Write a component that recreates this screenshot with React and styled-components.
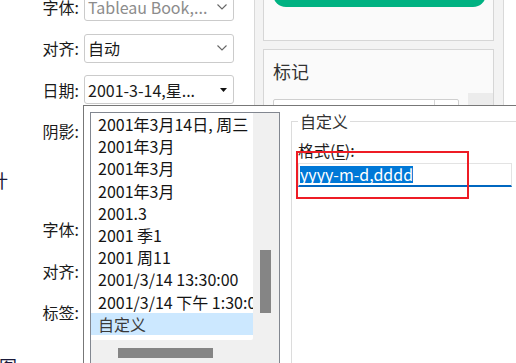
import React from "react";
import styled, { createGlobalStyle } from "styled-components";

const GlobalStyle = createGlobalStyle`
  html, body {
    margin: 0;
    padding: 0;
    background: #ffffff;
    overflow: hidden;
  }
  body {
    font-family: "Noto Sans CJK SC", "Noto Sans", sans-serif;
    color: #1e1e1e;
  }
`;

const Screen = styled.div`
  position: relative;
  width: 516px;
  height: 363px;
  overflow: hidden;
  display: flex;
  background: #ffffff;
`;

/* ---------- left property pane ---------- */

const LeftPane = styled.div`
  width: 254px;
  flex: none;
  display: flex;
  flex-direction: column;
  margin-top: -14px;
`;

const Row = styled.div`
  display: flex;
  align-items: center;
  height: 41.5px;
  flex: none;
`;

const Label = styled.div`
  width: 79px;
  text-align: right;
  font-size: 16px;
  line-height: 20px;
  color: #1a1a1a;
`;

const Select = styled.div`
  margin-left: 5px;
  width: 150px;
  height: 29px;
  box-sizing: border-box;
  border: 1px solid #cbcbcb;
  border-radius: 3px;
  padding: 0 6px 0 3px;
  display: flex;
  align-items: center;
  justify-content: space-between;
  font-size: 16px;
  color: ${(p) => (p.$muted ? "#8c8c8c" : "#1a1a1a")};
  background: #fff;
  white-space: nowrap;
`;

const SectionTitle = styled.div`
  height: ${(p) => p.$h}px;
  flex: none;
  box-sizing: border-box;
  padding-top: ${(p) => p.$top || 0}px;
  display: flex;
  align-items: ${(p) => (p.$top ? "flex-start" : "center")};
  margin-left: ${(p) => p.$indent}px;
  font-size: 18px;
  line-height: 22px;
  color: #1a1a3a;
`;

const Chevron = () => (
  <svg width="10" height="6" viewBox="0 0 10 6">
    <polyline points="0.5,0.5 5,5 9.5,0.5" fill="none" stroke="#666" strokeWidth="1.1" />
  </svg>
);

const Caret = () => (
  <svg width="7" height="4" viewBox="0 0 7 4">
    <polygon points="0,0 7,0 3.5,4" fill="#111" />
  </svg>
);

/* ---------- right card pane ---------- */

const RightPane = styled.div`
  width: 250px;
  flex: none;
  box-sizing: border-box;
  background: #f3f3f3;
  border-left: 1px solid #d9d9d9;
  border-right: 1px solid #d9d9d9;
  padding: 0 9px 0 8px;
  display: flex;
  flex-direction: column;
  gap: 8px;
`;

const Card = styled.div`
  box-sizing: border-box;
  background: #fafafa;
  border: 1px solid #d6d6d6;
  flex: none;
`;

const TopCard = styled(Card)`
  margin-top: -20px;
  height: 61px;
  padding: 0 7px 0 9px;
`;

const GreenButton = styled.div`
  height: 26px;
  border-radius: 0 0 13px 13px;
  background: #00b282;
`;

const MarksCard = styled(Card)`
  flex: 1;
  display: grid;
  grid-template-columns: 1fr 25px;
`;

const CardTitle = styled.div`
  padding: 9px 0 0 9px;
  font-size: 18px;
  line-height: 24px;
  color: #333;
`;

const CardSelect = styled.div`
  margin: 16px 0 0 9px;
  width: 186px;
  height: 30px;
  box-sizing: border-box;
  border: 1px solid #cfcfcf;
  border-radius: 2px;
  display: grid;
  grid-template-columns: 1fr 24px;
  background: #fff;

  & > span + span {
    border-left: 1px solid #d6d6d6;
  }
`;

const SideTrack = styled.div`
  margin-top: 43px;
  background: #ececec;
`;

/* ---------- date format popup ---------- */

const Popup = styled.div`
  position: absolute;
  left: 83px;
  top: 105px;
  right: -20px;
  bottom: -20px;
  background: #fff;
  border: 1px solid #777;
  box-sizing: border-box;
  display: flex;
  align-items: flex-start;
  padding: 6px 0 0 6px;
`;

const ListBox = styled.div`
  width: 190px;
  height: 280px;
  flex: none;
  box-sizing: border-box;
  border: 1px solid #828790;
  border-bottom: none;
  display: grid;
  grid-template-columns: 162px 26px;
  grid-template-rows: 227px 1fr;
  background: #f0f0f0;
`;

const List = styled.div`
  background: #fff;
  overflow: hidden;
  border-bottom-right-radius: 2px;
`;

const Item = styled.div`
  height: 22.2px;
  line-height: 22px;
  padding-left: 7px;
  font-size: 16px;
  white-space: nowrap;
  overflow: hidden;
  color: ${(p) => (p.$selected ? "#3a3a3a" : "#141414")};
  background: ${(p) => (p.$selected ? "#cce8ff" : "transparent")};
`;

const VScroll = styled.div`
  background: #f0f0f0;
  padding: 137px 0 0 7px;
`;

const VThumb = styled.div`
  width: 11px;
  height: 63px;
  background: #858585;
`;

const HScroll = styled.div`
  grid-column: 1 / -1;
  padding: 8px 0 0 27px;
`;

const HThumb = styled.div`
  width: 95px;
  height: 10px;
  background: #858585;
`;

const GroupBox = styled.fieldset`
  margin: -2px 0 0 11px;
  padding: 0 0 0 6px;
  width: 260px;
  height: 300px;
  box-sizing: border-box;
  border: 1px solid #dcdcdc;
  border-radius: 0;
`;

const Legend = styled.legend`
  padding: 0 2px;
  margin-left: 0;
  font-size: 16px;
  line-height: 22px;
  color: #333;
`;

const FieldLabel = styled.div`
  font-size: 16px;
  line-height: 20px;
  margin-top: 8px;
  color: #1e1e1e;

  & u {
    text-underline-offset: 2px;
  }
`;

const FormatInput = styled.div`
  margin-top: 3px;
  width: 214px;
  height: 24px;
  box-sizing: border-box;
  border: 1px solid #e3e3e3;
  border-bottom: 2px solid #0067c0;
  background: #fff;
  display: flex;
  align-items: center;
  padding-left: 1px;
`;

const Selection = styled.span`
  background: #0078d7;
  color: #fff;
  font-size: 16px;
  line-height: 17px;
  height: 17px;
  white-space: nowrap;
`;

const Annotation = styled.div`
  position: absolute;
  left: 296px;
  top: 151px;
  width: 173px;
  height: 48px;
  box-sizing: border-box;
  border: 2px solid #ee1c25;
`;

const formats = [
  "2001年3月14日, 周三",
  "2001年3月",
  "2001年3月",
  "2001年3月",
  "2001.3",
  "2001 季1",
  "2001 周11",
  "2001/3/14 13:30:00",
  "2001/3/14 下午 1:30:00",
  "自定义",
];

export default function App() {
  return (
    <>
      <GlobalStyle />
      <Screen>
        <LeftPane>
          <Row>
            <Label>字体:</Label>
            <Select $muted>
              <span>Tableau Book,...</span>
              <Chevron />
            </Select>
          </Row>
          <Row>
            <Label>对齐:</Label>
            <Select>
              <span>自动</span>
              <Chevron />
            </Select>
          </Row>
          <Row>
            <Label>日期:</Label>
            <Select>
              <span>2001-3-14,星...</span>
              <Caret />
            </Select>
          </Row>
          <Row>
            <Label>阴影:</Label>
          </Row>
          <SectionTitle $h={56.5} $indent={-10}>计</SectionTitle>
          <Row>
            <Label>字体:</Label>
          </Row>
          <Row>
            <Label>对齐:</Label>
          </Row>
          <Row>
            <Label>标签:</Label>
          </Row>
          <SectionTitle $h={60} $top={22} $indent={-1}>图</SectionTitle>
        </LeftPane>

        <RightPane>
          <TopCard>
            <GreenButton />
          </TopCard>
          <MarksCard>
            <div>
              <CardTitle>标记</CardTitle>
              <CardSelect>
                <span />
                <span />
              </CardSelect>
            </div>
            <SideTrack />
          </MarksCard>
        </RightPane>

        <Popup>
          <ListBox>
            <List>
              {formats.map((f, i) => (
                <Item key={i} $selected={i === formats.length - 1}>
                  {f}
                </Item>
              ))}
            </List>
            <VScroll>
              <VThumb />
            </VScroll>
            <HScroll>
              <HThumb />
            </HScroll>
          </ListBox>
          <GroupBox>
            <Legend>自定义</Legend>
            <FieldLabel>
              格式(<u>E</u>):
            </FieldLabel>
            <FormatInput>
              <Selection>yyyy-m-d,dddd</Selection>
            </FormatInput>
          </GroupBox>
        </Popup>

        <Annotation />
      </Screen>
    </>
  );
}
